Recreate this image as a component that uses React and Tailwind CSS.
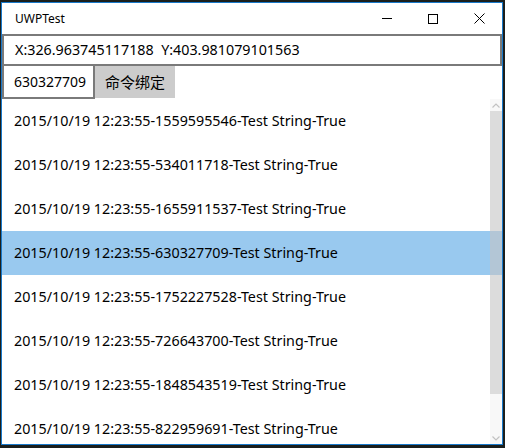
import { useState } from "react";

const items = [
  "2015/10/19 12:23:55-1559595546-Test String-True",
  "2015/10/19 12:23:55-534011718-Test String-True",
  "2015/10/19 12:23:55-1655911537-Test String-True",
  "2015/10/19 12:23:55-630327709-Test String-True",
  "2015/10/19 12:23:55-1752227528-Test String-True",
  "2015/10/19 12:23:55-726643700-Test String-True",
  "2015/10/19 12:23:55-1848543519-Test String-True",
  "2015/10/19 12:23:55-822959691-Test String-True",
];

const App = () => {
  const [selected, setSelected] = useState(3);

  return (
    <div
      className="w-[505px] h-[448px] bg-[#1b1f1d] pt-[2px] pl-[1px] pr-[2px] pb-[3px] overflow-hidden"
      style={{ fontFamily: '"Noto Sans", "Noto Sans CJK SC", sans-serif' }}
    >
      <div className="h-full flex flex-col bg-white border border-[#1979ca]">
        {/* Title bar */}
        <div className="h-[31px] flex items-center shrink-0">
          <span className="pl-[13px] text-[12px] text-black flex-1">UWPTest</span>
          <div className="flex items-center h-full">
            <div className="w-[46px] h-full flex items-center justify-center">
              <div className="w-[10px] h-px bg-black" />
            </div>
            <div className="w-[46px] h-full flex items-center justify-center">
              <div className="w-[10px] h-[10px] border border-black" />
            </div>
            <div className="w-[46px] h-full flex items-center justify-center">
              <svg width="11" height="11" viewBox="0 0 11 11">
                <path d="M0.5 0.5 L10.5 10.5 M10.5 0.5 L0.5 10.5" stroke="#000" strokeWidth="1" />
              </svg>
            </div>
          </div>
        </div>

        {/* Coordinates box */}
        <div className="h-[32px] border-2 border-[#7a7a7a] flex items-center pl-[11px] text-[14.3px] text-black shrink-0">
          X:326.963745117188&nbsp;&nbsp;Y:403.981079101563
        </div>

        {/* Input + command */}
        <div className="flex h-[33px] shrink-0">
          <div className="w-[93px] border-2 border-t-0 border-[#7a7a7a] flex items-center pl-[10px] text-[14px] text-black overflow-hidden whitespace-nowrap">
            630327709
          </div>
          <button className="w-[80px] h-[32px] bg-[#cccccc] text-[15px] text-black flex items-center justify-center">
            命令绑定
          </button>
        </div>

        {/* List */}
        <div className="relative flex-1 overflow-hidden">
          <div className="flex flex-col">
            {items.map((text, i) => (
              <div
                key={i}
                onClick={() => setSelected(i)}
                className={
                  "h-[44px] shrink-0 flex items-center pl-[12px] text-[14.3px] text-black " +
                  (i === selected ? "bg-[#99c9ef]" : "")
                }
              >
                {text}
              </div>
            ))}
          </div>

          {/* Scrollbar overlay */}
          <div className="absolute right-0 top-0 bottom-0 w-[12px] flex flex-col">
            <div className="h-[12px] flex items-center justify-center bg-[#f8f8f8]">
              <svg width="8" height="5" viewBox="0 0 8 5">
                <path d="M0.5 4.5 L4 1 L7.5 4.5" stroke="#c2c2c2" strokeWidth="1.2" fill="none" />
              </svg>
            </div>
            <div className="h-[283px] bg-[#c5c5c5]/60" />
            <div className="flex-1 bg-[#f8f8f8]" />
            <div className="h-[12px] flex items-center justify-center bg-[#f8f8f8]">
              <svg width="8" height="5" viewBox="0 0 8 5">
                <path d="M0.5 0.5 L4 4 L7.5 0.5" stroke="#c2c2c2" strokeWidth="1.2" fill="none" />
              </svg>
            </div>
          </div>
        </div>
      </div>
    </div>
  );
};

export default App;
